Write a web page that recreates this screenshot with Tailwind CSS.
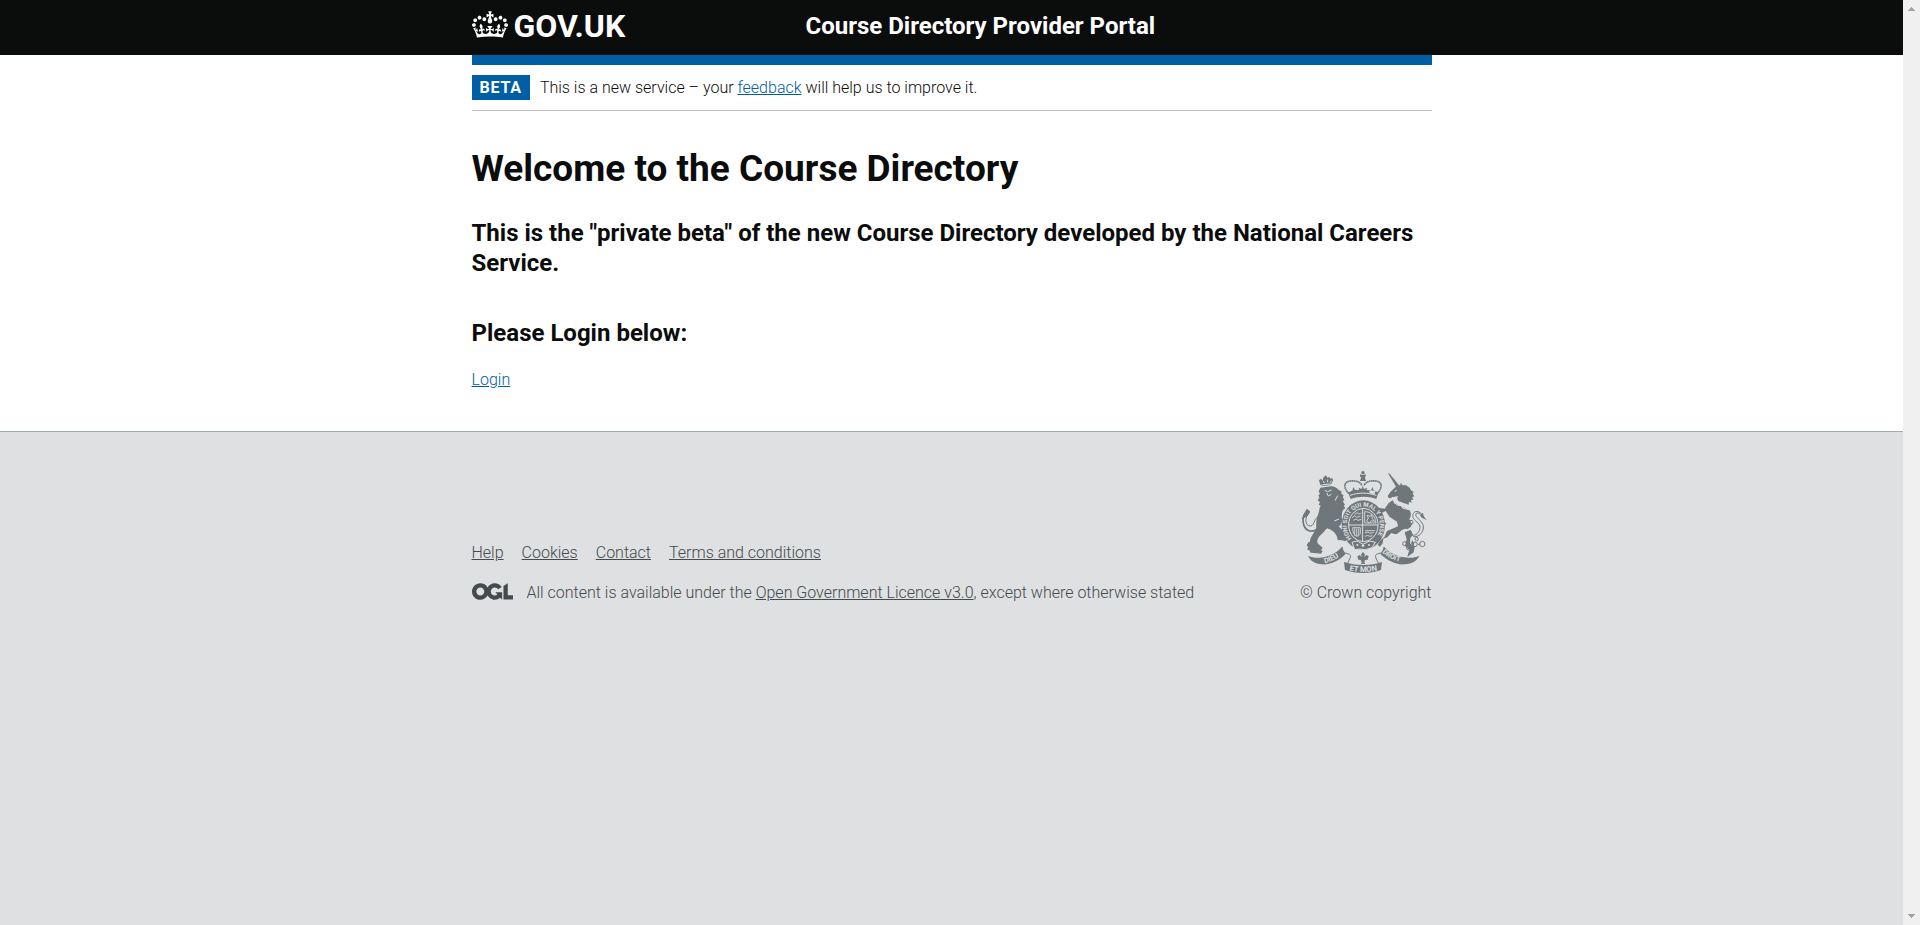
<!DOCTYPE html>
<html lang="en">
<head>
<meta charset="utf-8">
<meta name="viewport" content="width=device-width, initial-scale=1">
<title>Course Directory Provider Portal</title>
<script src="https://cdn.jsdelivr.net/npm/@tailwindcss/browser@4"></script>
</head>
<body class="flex min-h-screen bg-[#dee0e2] font-[Roboto,'Liberation_Sans',sans-serif] text-base text-[#0b0c0c]">
<div class="flex min-w-0 grow flex-col">
  <header class="bg-[#0b0c0c] text-white">
    <div class="mx-auto grid h-[55px] max-w-[960px] grid-cols-3 items-start pt-2">
      <a href="#" class="flex items-center gap-1.5 text-[32px] leading-9 font-bold">
        <svg class="mb-1 h-[27px] w-9" viewBox="0 0 132 97" fill="currentColor" aria-hidden="true"><path fill-rule="evenodd" d="M25 30.2c3.5 1.5 7.7-.2 9.1-3.7 1.5-3.6-.2-7.8-3.9-9.2-3.6-1.4-7.6.3-9.1 3.9-1.4 3.5.3 7.5 3.9 9zM9 39.5c3.6 1.5 7.8-.2 9.2-3.7 1.5-3.6-.2-7.8-3.9-9.1-3.6-1.5-7.6.2-9.1 3.8-1.4 3.5.3 7.5 3.8 9zM4.4 57.2c3.5 1.5 7.7-.2 9.1-3.8 1.5-3.6-.2-7.7-3.9-9.1-3.5-1.5-7.6.3-9.1 3.8-1.4 3.5.3 7.6 3.9 9.1zm38.3-21.4c3.5 1.5 7.7-.2 9.1-3.8 1.5-3.6-.2-7.7-3.9-9.1-3.6-1.5-7.6.3-9.1 3.8-1.3 3.6.4 7.7 3.9 9.1zm64.4-5.6c-3.6 1.5-7.8-.2-9.1-3.7-1.5-3.6.2-7.8 3.8-9.2 3.6-1.4 7.7.3 9.2 3.9 1.3 3.5-.4 7.5-3.9 9zm15.9 9.3c-3.6 1.5-7.7-.2-9.1-3.7-1.5-3.6.2-7.8 3.7-9.1 3.6-1.5 7.7.2 9.2 3.8 1.5 3.5-.3 7.5-3.8 9zm4.7 17.7c-3.6 1.5-7.8-.2-9.2-3.8-1.5-3.6.2-7.7 3.9-9.1 3.6-1.5 7.7.3 9.2 3.8 1.3 3.5-.4 7.6-3.9 9.1zM89.3 35.8c-3.6 1.5-7.8-.2-9.2-3.8-1.4-3.6.2-7.7 3.9-9.1 3.6-1.5 7.7.3 9.2 3.8 1.4 3.6-.3 7.7-3.9 9.1zM69.7 17.7l8.9 4.7V9.3l-8.9 2.8c-.2-.3-.5-.6-.9-.9L72.4 0H59.6l3.5 11.2c-.3.3-.6.5-.9.9l-8.8-2.8v13.1l8.8-4.7c.3.3.6.7.9.9l-5 15.4v.1c-.2.8-.4 1.6-.4 2.4 0 4.1 3.1 7.5 7 8.1h.2c.3 0 .7.1 1 .1.4 0 .7 0 1-.1h.2c4-.6 7.1-4.1 7.1-8.1 0-.8-.1-1.7-.4-2.4V34l-5.1-15.4c.4-.2.7-.6 1-.9zM66 92.8c16.9 0 32.8 1.1 47.1 3.2 4-16.9 8.9-26.7 14-33.5l-9.6-3.4c1 4.9 1.1 7.2 0 10.2-1.5-1.4-3-4.3-4.2-8.7L108.6 76c2.8-2 5-3.2 7.5-3.3-4.4 9.4-10 11.9-13.6 11.2-4.3-.8-6.3-4.6-5.6-7.9 1-4.7 5.7-5.9 8-.5 4.3-8.7-3-11.4-7.6-8.8 7.1-7.2 7.9-13.5 2.1-21.1-8 6.1-8.1 12.3-4.5 20.8-4.7-5.4-12.1-2.5-9.5 6.2 3.4-5.2 7.9-2 7.2 3.1-.6 4.3-6.4 7.8-13.5 7.2-10.3-.9-10.9-8-11.2-13.8 2.5-.5 7.1 1.8 11 7.3L80.2 60c-4.1 4.4-8 5.3-12.3 5.4 1.4-4.4 8-11.6 8-11.6H55.5s6.4 7.2 7.9 11.6c-4.2-.1-8-1-12.3-5.4l1.4 16.4c3.9-5.5 8.5-7.7 10.9-7.3-.3 5.8-.9 12.8-11.1 13.8-7.2.6-12.9-2.9-13.5-7.2-.7-5 3.8-8.3 7.1-3.1 2.7-8.7-4.6-11.6-9.4-6.2 3.7-8.5 3.6-14.7-4.6-20.8-5.8 7.6-5 13.9 2.2 21.1-4.7-2.6-11.9.1-7.7 8.8 2.3-5.5 7.1-4.2 8.1.5.7 3.3-1.3 7.1-5.7 7.9-3.5.7-9-1.8-13.5-11.2 2.5.1 4.7 1.3 7.5 3.3l-4.7-15.4c-1.2 4.4-2.7 7.2-4.3 8.7-1.1-3-.9-5.3 0-10.2l-9.5 3.4c5 6.9 9.9 16.7 14 33.5 14.8-2.1 30.8-3.2 47.7-3.2z"/></svg>
        <span>GOV.UK</span>
      </a>
      <a href="#" class="col-span-2 pl-3.5 text-2xl leading-9 font-bold">Course Directory Provider Portal</a>
    </div>
  </header>

  <div class="bg-white">
    <div class="mx-auto max-w-[960px] border-t-10 border-[#005ea5]">
      <div class="flex items-center gap-2.5 border-b border-[#bfc1c3] py-2.5">
        <strong class="bg-[#005ea5] px-2 leading-[25px] font-bold tracking-wider text-white">BETA</strong>
        <span class="leading-5 font-light">This is a new service – your <a href="#" class="text-[#005ea5] underline">feedback</a> will help us to improve it.</span>
      </div>
      <main class="pt-[38px] pb-[41px]">
        <h1 class="text-[37px] leading-10 font-bold">Welcome to the Course Directory</h1>
        <h2 class="mt-[29px] text-2xl leading-[30px] font-bold">This is the "private beta" of the new Course Directory developed by the National Careers Service.</h2>
        <h2 class="mt-10 text-2xl leading-[30px] font-bold">Please Login below:</h2>
        <p class="mt-[22px] leading-5 font-light"><a href="#" class="text-[#005ea5] underline">Login</a></p>
      </main>
    </div>
  </div>

  <footer class="grow border-t border-[#a1acb2] pt-[39px] font-light text-[#454a4c]">
    <div class="mx-auto flex max-w-[960px] items-end justify-between">
      <div>
        <ul class="flex gap-[18px] leading-5">
          <li><a href="#" class="underline">Help</a></li>
          <li><a href="#" class="underline">Cookies</a></li>
          <li><a href="#" class="underline">Contact</a></li>
          <li><a href="#" class="underline">Terms and conditions</a></li>
        </ul>
        <div class="mt-5 flex items-start gap-3.5 leading-5">
          <svg class="h-[17px] w-[41px]" viewBox="0 0 483.2 195.7" fill="currentColor" role="img" aria-label="OGL"><path d="M421.5 142.8V.1l-50.7 32.3v161.1h112.4v-50.7zm-122.3-9.6A47.12 47.12 0 0 1 221 97.8c0-26 21.1-47.1 47.1-47.1 16.7 0 31.4 8.7 39.7 21.8l42.7-27.2A97.63 97.63 0 0 0 268.1 0c-36.5 0-68.3 20.1-85.1 49.7A98 98 0 0 0 97.8 0C43.9 0 0 43.9 0 97.8s43.9 97.8 97.8 97.8c36.5 0 68.3-20.1 85.1-49.7a97.76 97.76 0 0 0 149.6 25.4l19.4 22.2h3v-87.8h-80l24.3 27.5zM97.8 145c-26 0-47.1-21.1-47.1-47.1s21.1-47.1 47.1-47.1 47.1 21.1 47.1 47.1S123.8 145 97.8 145"/></svg>
          <span>All content is available under the <a href="#" class="underline">Open Government Licence v3.0</a>, except where otherwise stated</span>
        </div>
      </div>
      <a href="#" class="flex flex-col items-end gap-2.5 leading-5">
        <svg class="mr-[5px] h-[102px] w-[125px]" viewBox="66 36 375 306" aria-hidden="true">
          <g fill="#6f777b">
            <!-- lion: crown, body, tail -->
            <path d="M122 82l-5-18 6-5 5 6 1-8 5-5 2-3 4 3 3 5 5-4 3 6 6-2 2 7-6 14z"/>
            <path d="M121 86l31-4c12 0 20 5 25 12l8 3-2 5 8 8-3 3 5 11-5 2 7 11-4 3 5 8c-12 6-11 20-10 34 0 10-4 17-10 20l15 15c4 8 2 17 10 20l-4 10-11-3-13-1-2-10c-6-14-16-20-29-25-7 5-10 12-20 20-10 10-14 20-6 28l12 10-5 7 5 4-5 7-12-1-19-2-4-7-6-2 2-9-4-4 5-9 5-2c0-16 14-26 18-39 2-15-1-27 6-42 4-9 3-19 8-27l-6-3 4-7-7-6 5-8-3-7 5-4-4-8 3-6z"/>
            <path d="M66 180c5-20 10-20 14-31l10 8c-2 12-10 16-21 22z"/>
            <!-- unicorn: horn, head and mane, body, hooves, tail tuft -->
            <path d="M323 41l7 5 29 35-9 5z"/>
            <path d="M331 99l7-7 11-10 12-4 1-7 6 8 10 0 11 7 4 8 8 5-3 5 5 8-6 2 3 9-7-1 2 9-8-3-1 9-30-10c-5-5-5-10-2-16l-9 2-8 1-5 4-6-1-3-6z"/>
            <path d="M326 132l12-8 8 9 44 22c4 10 3 18-2 26l8 15-4 8-10 7-6-2c-16 4-17 14-30 17l-12-4-12 13-12 4-2 14-8 10-7-5 6-12 14-12 8-18 14-6 19-8-3-14-22-14-12-18-12 6 4 20 10 12-6 6-12-13-2-17-8-4 8-10-5-10 20 3z"/>
            <path d="M374 220l18-8 7 15-8 10-1 16 14 11-3 16-19 14 3-12 4-9-14-12 5-20zM397 244l-4 9 7 8 3-6zM441 184c-10-12-10-12-12-23-5 4-8 6-9 8 4 10 13 10 21 15z"/>
            <!-- imperial crown on top of the garter -->
            <circle cx="249" cy="41" r="5"/><path d="M240 46l8 2 9-2v8l-9-2-8 2zM245 50h8l5 16h-18z"/>
            <path d="M204 100c26-10 64-10 92 0l-7 20c-24-9-52-9-77 0zM248 80l4 10 9-4-3 14h-19l-3-14 9 4zM220 84l5 9 6-1-2 11-14 3-4-10 6-1zM278 84l-5 9-6-1 2 11 14 3 4-10-6-1z"/>
          </g>
          <g fill="none" stroke="#6f777b">
            <path stroke-width="5" stroke-dasharray="5 1" d="M207 104c-18-18-16-36 4-38 16-2 30 2 35 14M291 104c18-18 16-36-4-38-16-2-30 2-35 14"/>
            <path stroke-width="5" d="M83 157c-16 12-16 28-11 43 6 16 20 21 38 12"/>
            <path stroke-width="3" d="M88 160c-16 16-13 42 4 41 14-2 8-29 30-28M427 168c-18-24-38-2-24 14 10 10 24 16 13 36-6 11-17 13-25 10"/>
            <path stroke-width="3" d="M422 166c-12-10-20 0-10 10 12 12 26 25 13 45-5 9-15 13-25 12"/>
            <g stroke-width="3"><circle cx="374" cy="254" r="6"/><circle cx="386" cy="267" r="6"/><circle cx="405" cy="256" r="7"/><circle cx="427" cy="255" r="8"/><circle cx="410" cy="240" r="5"/><circle cx="393" cy="190" r="6"/><path d="M392 260l5-1M414 256h5"/></g>
          </g>
          <!-- breaks in the silhouettes -->
          <g fill="none" stroke="#dee0e2" stroke-width="3">
            <path d="M134 94l9 4 12-5M140 102l5 9 9-5M130 66l3 6M143 62v8M154 65l-3 6M120 80c10-4 26-6 38-4M173 110l-8 15M177 180l-14 6"/>
            <path d="M344 97l6-3M342 128l9 10 12 2 8 9 14 1M344 134l-2-8M356 141l2-9M368 148l4-9M381 151l3-8M210 109c28-9 50-9 79 0"/>
          </g>
          <!-- garter and shield -->
          <ellipse cx="250" cy="198" rx="65" ry="74" fill="#6f777b"/>
          <ellipse cx="250" cy="198" rx="44" ry="50" fill="#6f777b" stroke="#dee0e2" stroke-width="3"/>
          <path fill="none" stroke="#dee0e2" stroke-width="3" d="M248 149v98M207 198h86"/>
          <g fill="none" stroke="#dee0e2" stroke-width="2.5">
            <path d="M216 176l8-6 6 5 12-4M220 184l8-4 6 4 10-3M224 166l7-5 5 4 8-3M255 215h30M255 222l9-3 6 4 11-3M255 232l8-3 6 3 8-2"/>
            <path d="M254 158c20 0 32 14 34 34h-34zM260 186l5-9-4-8 10 3 4-6 2 13 7 8-10-2-6 7zM218 206h23v18c-5 8-12 10-16 4-6-5-7-12-7-22zM224 208v22M230 208v24M236 208v22"/>
          </g>
          <path id="garter" fill="none" d="M222 245A50 56 0 1 1 278 245"/>
          <text class="text-[18px] font-bold" fill="#dee0e2"><textPath href="#garter" startOffset="10">HONI SOIT QUI MAL Y PENSE</textPath></text>
          <path fill="#6f777b" stroke="#dee0e2" stroke-width="3" d="M216 250l15-4 18 10 20-10 17 4-10 16-20 6-16-2-16 2z"/>
          <g fill="#dee0e2"><path d="M249 255l5 5-5 5-5-5z"/><circle cx="232" cy="258" r="3"/><circle cx="267" cy="258" r="3"/></g>
          <!-- motto scroll -->
          <g fill="#6f777b">
            <path d="M84 290c12 5 22 7 34 6 24-1 50-12 68-32l10 22c-20 20-44 32-70 30-22-2-34-10-42-26zM418 290c-12 5-22 7-34 6-30-2-52-12-72-32l-10 22c22 20 46 32 72 30 24-2 36-10 44-26z"/>
            <path d="M192 309c36 12 80 12 114 0l-3 24c-32 12-76 12-108 0z"/>
          </g>
          <path fill="none" stroke="#6f777b" stroke-width="3" d="M187 264c-6 8 2 18 16 20 10 2 10 8 6 16l-6 12M311 264c6 8-2 18-16 20-10 2-10 8-6 16l6 12"/>
          <path fill="#6f777b" d="M249 278l6 9-3 8 7-7 7 4-3 10-9 1 2 4-4 1 4 8-7-2-7 2 4-8-4-1 2-4-9-1-3-10 7-4 7 7-3-8z"/>
          <path id="dieu" fill="none" d="M130 313q34-4 66-36"/>
          <path id="mon" fill="none" d="M196 331q54 16 110 0"/>
          <path id="droit" fill="none" d="M304 278q28 29 76 33"/>
          <g class="font-bold" fill="#dee0e2">
            <text class="text-[22px]"><textPath href="#dieu" startOffset="4">DIEU</textPath></text>
            <text class="text-[23px]"><textPath href="#mon" startOffset="12">ET MON</textPath></text>
            <text class="text-[21px]"><textPath href="#droit" startOffset="3">DROIT</textPath></text>
          </g>
        </svg>
        <span>© Crown copyright</span>
      </a>
    </div>
  </footer>
</div>

<!-- page scrollbar track -->
<div class="flex w-[17px] shrink-0 flex-col items-center justify-between bg-[#f0f0f0] py-[7px] text-[#a3a3a3]" aria-hidden="true">
  <svg class="h-1 w-[7px]" viewBox="0 0 7 4" fill="currentColor" shape-rendering="crispEdges"><path d="M3 0h1v1h1v1h1v1h1v1H0V3h1V2h1V1h1z"/></svg>
  <svg class="h-1 w-[7px]" viewBox="0 0 7 4" fill="currentColor" shape-rendering="crispEdges"><path d="M0 0h7v1H6v1H5v1H4v1H3V3H2V2H1V1H0z"/></svg>
</div>
</body>
</html>
